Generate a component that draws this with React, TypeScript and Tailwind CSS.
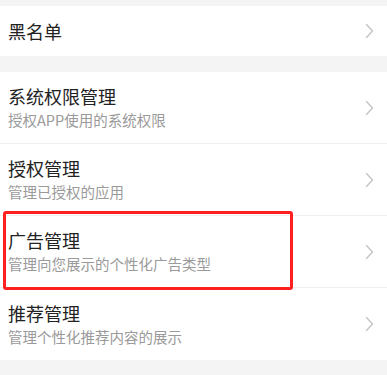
import React from "react";

const Chevron = () => (
  <svg width="9" height="16" viewBox="0 0 9 16" fill="none" className="shrink-0">
    <path d="M1.5 1.5 L7.5 8 L1.5 14.5" stroke="#c4c4c4" strokeWidth="1.4" strokeLinecap="round" strokeLinejoin="round" />
  </svg>
);

const rows = [
  { t: "系统权限管理", s: "授权APP使用的系统权限" },
  { t: "授权管理", s: "管理已授权的应用" },
  { t: "广告管理", s: "管理向您展示的个性化广告类型", hl: true },
  { t: "推荐管理", s: "管理个性化推荐内容的展示" },
];

export default function App() {
  return (
    <div
      className="w-[387px] h-[375px] bg-[#f4f4f4] overflow-hidden pt-[6px]"
      style={{ fontFamily: '"Noto Sans CJK SC", "Noto Sans", sans-serif' }}
    >
      <div className="bg-white h-[50px] flex items-center justify-between pl-[8px] pr-[13px]">
        <span className="text-[18px] leading-[24px] text-[#222]">黑名单</span>
        <Chevron />
      </div>
      <div className="bg-white mt-[16px] flex flex-col">
        {rows.map((r, i) => (
          <div
            key={i}
            className={`relative h-[72px] flex items-center justify-between pl-[8px] pr-[13px] ${i < rows.length - 1 ? "border-b border-[#efefef]" : ""}`}
          >
            <div className="flex flex-col gap-[2px] pb-[1px]">
              <span className="text-[18px] leading-[24px] text-[#222]">{r.t}</span>
              <span className="text-[14.5px] leading-[20px] text-[#9a9a9a]">{r.s}</span>
            </div>
            <Chevron />
            {r.hl && (
              <div className="absolute left-[3px] top-[-5px] w-[290px] h-[79px] border-[3px] border-[#ff1f1f] rounded-[3px]" />
            )}
          </div>
        ))}
      </div>
    </div>
  );
}
